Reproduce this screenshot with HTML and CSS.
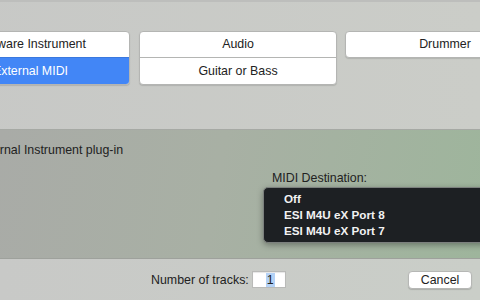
FILE: index.html
```html
<!DOCTYPE html>
<html lang="en">
<head>
    <meta charset="UTF-8">
    <title>New Track</title>
    <link rel="stylesheet" href="styles.css">
</head>
<body>
    <div class="sheet">
        <div class="types">
            <div class="type-col">
                <div class="type-btn">Software Instrument</div>
                <div class="type-btn selected">External MIDI</div>
            </div>
            <div class="type-col">
                <div class="type-btn">Audio</div>
                <div class="type-btn">Guitar or Bass</div>
            </div>
            <div class="type-col">
                <div class="type-btn">Drummer</div>
            </div>
        </div>

        <div class="details">
            <p class="desc">External Instrument plug-in</p>
            <div class="dest">
                <span class="dest-label">MIDI Destination:</span>
                <div class="check-row">
                    <span class="check"></span>
                    <span class="tick"></span>
                </div>
            </div>
            <ul class="menu">
                <li>Off</li>
                <li>ESI M4U eX Port 8</li>
                <li>ESI M4U eX Port 7</li>
            </ul>
        </div>

        <div class="footer">
            <label class="tracks">Number of tracks:
                <span class="num-input"><span class="sel">1</span></span>
            </label>
            <button class="cancel">Cancel</button>
        </div>
    </div>
</body>
</html>
```
FILE: styles.css
```css
body {
    margin: 0;
    width: 480px;
    height: 300px;
    overflow: hidden;
    font-family: "Liberation Sans", Arial, sans-serif;
    font-size: 12.4px;
    color: #222;
}
.sheet {
    display: flex;
    flex-direction: column;
    height: 300px;
}
.types {
    height: 130px;
    box-sizing: border-box;
    padding-top: 29px;
    display: grid;
    grid-template-columns: 199px 199px 200px;
    column-gap: 8px;
    align-items: start;
    margin-left: -69px;
    background: linear-gradient(90deg, #c7c8c6, #cbcdc8);
    border-top: 2px solid #bdbebc;
    border-bottom: 1px solid #a6a9a4;
}
.type-col:nth-child(2) {
    margin-left: 1px;
}
.type-col {
    display: flex;
    flex-direction: column;
    border: 1px solid #b4b5b3;
    border-radius: 4px;
    overflow: hidden;
    background: #fff;
    box-shadow: 0 1px 1px rgba(0, 0, 0, 0.12);
}
.type-btn {
    height: 25px;
    line-height: 25px;
    text-align: center;
}
.type-btn + .type-btn {
    border-top: 1px solid #b4b5b3;
    height: 26px;
    line-height: 26px;
}
.type-btn.selected {
    background: #4286f6;
    color: #fff;
    border-top-color: #3a78de;
}
.details {
    position: relative;
    height: 128px;
    background: linear-gradient(100deg, #a9aba7 0%, #a8b0a4 45%, #9eb59c 100%);
}
.desc {
    margin: 13px 0 0 -25px;
}
.dest {
    display: flex;
    flex-direction: column;
    gap: 42px;
    margin: 14px 0 0 272px;
}
.check-row {
    display: flex;
    gap: 55px;
    align-items: center;
}
.check {
    width: 11px;
    height: 11px;
    border-radius: 3px;
    background: #4a7bf0;
}
.tick {
    width: 5px;
    height: 3px;
    background: #5b5f5a;
}
.menu {
    position: absolute;
    left: 263px;
    top: 57px;
    width: 240px;
    margin: 0;
    padding: 3px 0 3px 20px;
    list-style: none;
    background: #1d2023;
    border: 1px solid #7c807e;
    border-radius: 5px;
    box-shadow: 0 2px 6px rgba(0, 0, 0, 0.35);
    color: #f2f2f2;
    font-weight: bold;
    font-size: 11.7px;
}
.menu li {
    height: 16px;
    line-height: 16px;
}
.footer {
    flex: 1;
    display: flex;
    align-items: center;
    padding: 0 8px 0 151px;
    background: linear-gradient(90deg, #c8c9c7, #cacec8);
    border-top: 1px solid #9ea19c;
}
.tracks {
    display: flex;
    align-items: center;
    gap: 3px;
}
.num-input {
    width: 34px;
    height: 17px;
    background: #fff;
    border: 1px solid #b9bab8;
    box-shadow: inset 0 1px 1px rgba(0, 0, 0, 0.1);
    padding-left: 13px;
    box-sizing: border-box;
    display: flex;
    align-items: center;
}
.sel {
    background: #b4d2f6;
    line-height: 14px;
    padding: 0 1px;
}
.cancel {
    margin-left: auto;
    width: 64px;
    height: 18px;
    padding: 0;
    font: inherit;
    color: #222;
    background: #fff;
    border: 1px solid #b6b7b5;
    border-radius: 4px;
    box-shadow: 0 1px 1px rgba(0, 0, 0, 0.15);
}
```
